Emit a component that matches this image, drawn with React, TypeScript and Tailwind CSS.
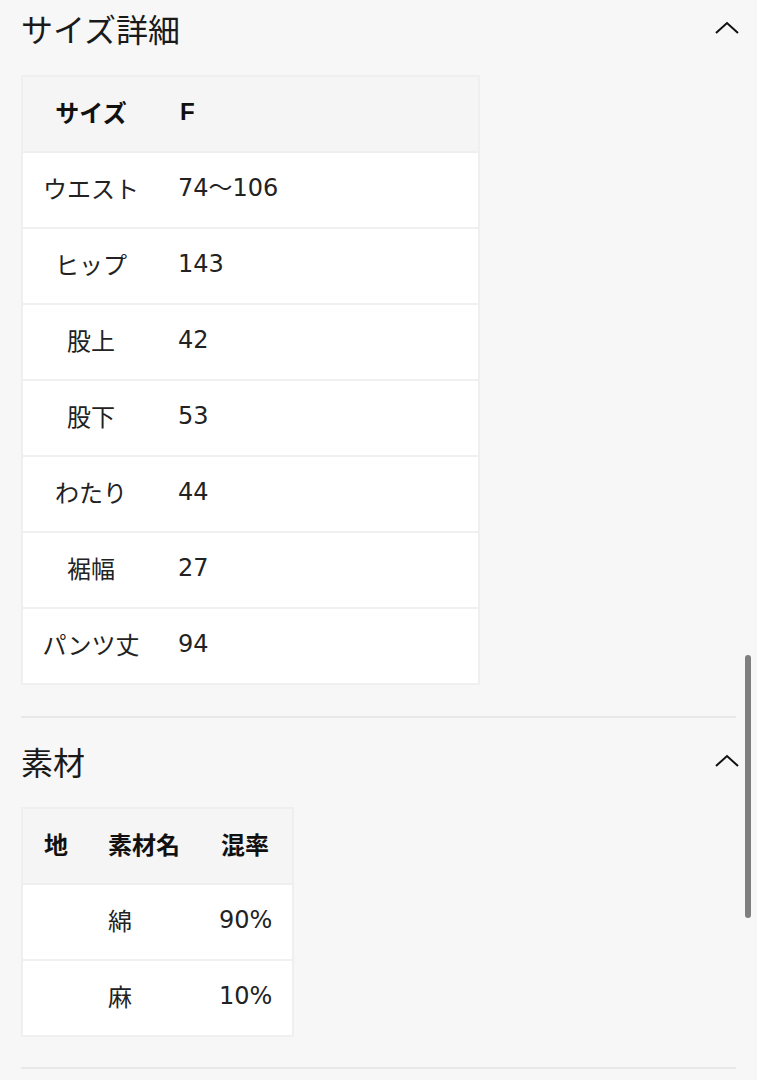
import React from "react";

const font = { fontFamily: '"DejaVu Sans", "Noto Sans CJK JP", "Noto Sans", sans-serif' };
const bold = { fontFamily: '"Liberation Sans", "Noto Sans CJK JP", sans-serif' };
const cjk = { fontFamily: '"Noto Sans CJK JP", "Noto Sans", sans-serif' };

function Chevron() {
  return (
    <svg width="26" height="14" viewBox="0 0 26 14" className="mb-[6px] mr-[-4px]">
      <polyline points="2,12 13,2 24,12" fill="none" stroke="#111" strokeWidth="2" />
    </svg>
  );
}

function Title({ text }: { text: string }) {
  return (
    <div className="flex items-center justify-between h-[62px]">
      <span className="text-[32px] leading-[56px] pb-[6px] text-[#1a1a1a]" style={cjk}>
        {text}
      </span>
      <Chevron />
    </div>
  );
}

const sizeRows: [string, string][] = [
  ["ウエスト", "74〜106"],
  ["ヒップ", "143"],
  ["股上", "42"],
  ["股下", "53"],
  ["わたり", "44"],
  ["裾幅", "27"],
  ["パンツ丈", "94"],
];

export default function App() {
  return (
    <div className="relative min-h-[1080px] bg-[#f7f7f7] px-[21px] overflow-hidden" style={cjk}>
      <Title text="サイズ詳細" />
      <table className="mt-[13px] w-[459px] table-fixed border-collapse border-2 border-[#efefef] text-[24px]">
        <colgroup>
          <col className="w-[137px]" />
          <col />
        </colgroup>
        <thead>
          <tr className="h-[76px] bg-[#f5f5f5] border-b-2 border-[#efefef]">
            <th className="text-center pb-[5px] font-bold text-[#111]">サイズ</th>
            <th className="text-left pl-[21px] pb-[5px] font-bold text-[#111]" style={bold}>F</th>
          </tr>
        </thead>
        <tbody>
          {sizeRows.map(([k, v]) => (
            <tr key={k} className="h-[76px] bg-white border-b-2 border-[#f0f0f0]">
              <td className="text-center pb-[5px] text-[#222]">{k}</td>
              <td className="text-left pl-[19px] pb-[5px] font-normal text-[#222]" style={font}>{v}</td>
            </tr>
          ))}
        </tbody>
      </table>
      <div className="mt-[31px] h-[2px] bg-[#e8e8e8]" />
      <div className="pt-[15px]">
        <Title text="素材" />
      </div>
      <table className="mt-[12px] w-[271px] table-fixed border-collapse border-2 border-[#efefef] text-[24px]">
        <colgroup>
          <col className="w-[65px]" />
          <col className="w-[113px]" />
          <col className="w-[93px]" />
        </colgroup>
        <thead>
          <tr className="h-[76px] bg-[#f5f5f5] border-b-2 border-[#efefef]">
            <th className="text-left pl-[21px] pb-[5px] font-bold text-[#111]">地</th>
            <th className="text-left pl-[21px] pb-[5px] font-bold text-[#111]">素材名</th>
            <th className="text-left pl-[21px] pb-[5px] font-bold text-[#111]">混率</th>
          </tr>
        </thead>
        <tbody>
          {[
            ["", "綿", "90%"],
            ["", "麻", "10%"],
          ].map(([a, b, c]) => (
            <tr key={b} className="h-[76px] bg-white border-b-2 border-[#f0f0f0]">
              <td className="pl-[21px] pb-[5px] text-[#222]">{a}</td>
              <td className="pl-[21px] pb-[5px] text-[#222]">{b}</td>
              <td className="pl-[19px] pb-[5px] font-normal text-[#222]" style={font}>{c}</td>
            </tr>
          ))}
        </tbody>
      </table>
      <div className="mt-[30px] h-[2px] bg-[#e8e8e8]" />
      <div className="absolute right-[6px] top-[655px] h-[263px] w-[6px] rounded-full bg-[#7f7f7f]" />
    </div>
  );
}
